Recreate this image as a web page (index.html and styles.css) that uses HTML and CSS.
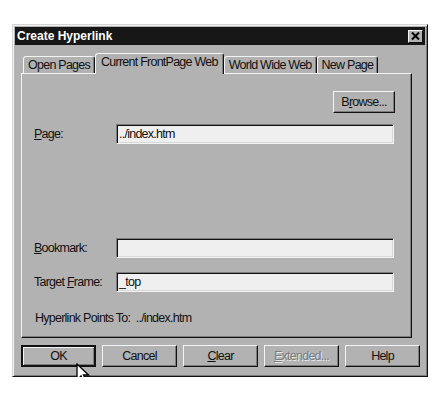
FILE: index.html
```html
<!DOCTYPE html>
<html lang="en">
<head>
  <meta charset="UTF-8" />
  <title>Create Hyperlink</title>
  <link rel="stylesheet" href="styles.css">
</head>
<body>

  <div class="window">
    <div class="titlebar">
      <span class="title">Create Hyperlink</span>
      <span class="close">
        <svg width="9" height="8" viewBox="0 0 9 8"><path d="M1 0.5 L8 7.5 M8 0.5 L1 7.5" stroke="#000" stroke-width="2"/></svg>
      </span>
    </div>

    <div class="tabs">
      <div class="tab">Open Pages</div>
      <div class="tab active">Current FrontPage Web</div>
      <div class="tab">World Wide Web</div>
      <div class="tab">New Page</div>
    </div>

    <div class="panel">
      <div class="browse-row"><button class="btn browse">B<u>r</u>owse...</button></div>

      <div class="field">
        <label><u>P</u>age:</label>
        <div class="input">../index.htm</div>
      </div>

      <div class="field bookmark">
        <label><u>B</u>ookmark:</label>
        <div class="input"></div>
      </div>

      <div class="field target">
        <label>Target <u>F</u>rame:</label>
        <div class="input">_top</div>
      </div>

      <div class="points">Hyperlink Points To:&nbsp; ../index.htm</div>
    </div>

    <div class="buttons">
      <button class="btn default">OK</button>
      <button class="btn">Cancel</button>
      <button class="btn"><u>C</u>lear</button>
      <button class="btn disabled"><u>E</u>xtended...</button>
      <button class="btn">Help</button>
    </div>

    <svg class="cursor" width="14" height="22" viewBox="0 0 14 22">
      <path d="M1 1 L1 17 L5 13 L8 20 L10.5 19 L7.5 12 L12.5 12 Z" fill="#fff" stroke="#000" stroke-width="1.3" stroke-linejoin="miter"/>
    </svg>
  </div>

</body>
</html>
```

FILE: styles.css
```css
* { box-sizing: border-box; }
body {
  margin: 0;
  background: #fff;
  font-family: "Liberation Sans", Arial, sans-serif;
  font-size: 12.5px;
  letter-spacing: -0.75px;
  color: #111;
}

.window {
  position: relative;
  margin: 24px 0 0 12px;
  width: 416px;
  height: 353px;
  padding: 2px;
  background: #b2b2b2;
  border: 1px solid;
  border-color: #d4d4d4 #111 #111 #d4d4d4;
  box-shadow: inset 1px 1px #f4f4f4, inset -1px -1px #7c7c7c;
}

.titlebar {
  height: 18px;
  background: #171717;
  display: flex;
  align-items: center;
  justify-content: space-between;
  padding: 0 2px 0 2px;
}
.title {
  font-weight: bold;
  font-size: 12px;
  letter-spacing: 0;
  color: #fff;
}
.close {
  width: 15px;
  height: 13px;
  background: #b2b2b2;
  border: 1px solid;
  border-color: #f4f4f4 #111 #111 #f4f4f4;
  display: flex;
  align-items: center;
  justify-content: center;
}

.tabs {
  display: flex;
  align-items: flex-end;
  height: 20px;
  margin: 8px 0 0 8px;
  white-space: nowrap;
}
.tab {
  height: 17px;
  padding: 1px 4px 0;
  line-height: 15px;
  border: 1px solid;
  border-bottom: none;
  border-color: #f4f4f4 #111 transparent #f4f4f4;
  border-radius: 3px 3px 0 0;
  box-shadow: inset -1px 0 #7c7c7c;
}
.tab.active {
  position: relative;
  height: 21px;
  margin-bottom: -1px;
  padding: 0 5px;
  line-height: 17px;
  background: #b2b2b2;
  z-index: 1;
}

.panel {
  width: 391px;
  height: 265px;
  margin-left: 6px;
  padding: 17px 16px 0 12px;
  border: 1px solid;
  border-color: #f4f4f4 #111 #111 #f4f4f4;
  box-shadow: inset -1px -1px #7c7c7c;
  display: flex;
  flex-direction: column;
}
.browse-row {
  display: flex;
  justify-content: flex-end;
  margin-bottom: 11px;
}

.btn {
  font: inherit;
  letter-spacing: inherit;
  color: #111;
  height: 22px;
  background: #b2b2b2;
  border: 1px solid;
  border-color: #f4f4f4 #111 #111 #f4f4f4;
  box-shadow: inset -1px -1px #7c7c7c;
  padding: 0;
}
.btn.browse { width: 62px; }

.field {
  display: flex;
  align-items: center;
}
.field label {
  width: 82px;
  flex-shrink: 0;
}
.input {
  width: 278px;
  height: 20px;
  padding: 1px 2px;
  line-height: 16px;
  background: #efefef;
  border: 1px solid;
  border-color: #7c7c7c #f4f4f4 #f4f4f4 #7c7c7c;
  box-shadow: inset 1px 1px #111, inset -1px -1px #d8d8d8;
}
.field.bookmark { margin-top: 94px; }
.field.target { margin-top: 14px; }

.points {
  margin-top: 19px;
  padding-left: 1px;
}

.buttons {
  display: flex;
  gap: 6px;
  margin: 7px 0 0 6px;
}
.buttons .btn { width: 75px; }
.btn.default {
  border: 2px solid #111;
  box-shadow: inset 1px 1px #f4f4f4, inset -1px -1px #7c7c7c;
}
.btn.disabled {
  color: #7c7c7c;
  text-shadow: 1px 1px #e8e8e8;
}

.cursor {
  position: absolute;
  left: 63px;
  top: 338px;
  z-index: 2;
}
```
